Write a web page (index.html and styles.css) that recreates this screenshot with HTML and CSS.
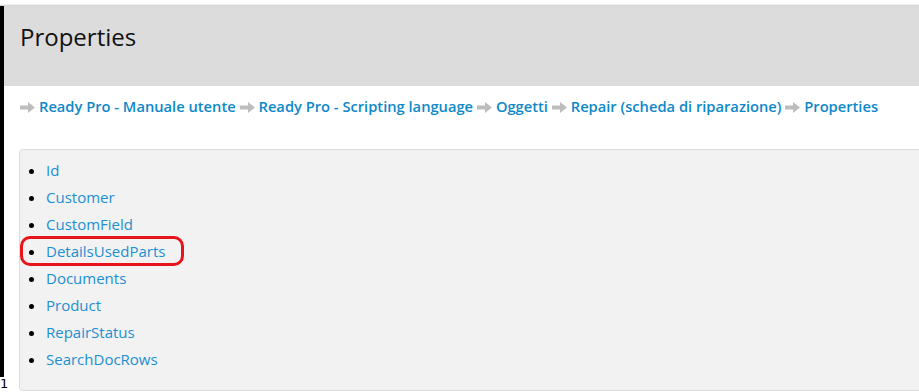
FILE: index.html
```html
<!DOCTYPE html>
<html>
<head>
<meta charset="utf-8">
<link rel="stylesheet" href="styles.css">
</head>
<body>
<div class="topgap"></div>
<div class="page">
  <header class="header">
    <h1 class="title">Properties</h1>
  </header>
  <nav class="crumbs">
    <span class="arrow"><svg width="15" height="11" viewBox="0 0 15 11"><path d="M0 3.5h8V0l7 5.5-7 5.5V7.5H0z" fill="#bdbdbd"/></svg></span><a href="#">Ready Pro - Manuale utente</a>
    <span class="arrow"><svg width="15" height="11" viewBox="0 0 15 11"><path d="M0 3.5h8V0l7 5.5-7 5.5V7.5H0z" fill="#bdbdbd"/></svg></span><a href="#">Ready Pro - Scripting language</a>
    <span class="arrow"><svg width="15" height="11" viewBox="0 0 15 11"><path d="M0 3.5h8V0l7 5.5-7 5.5V7.5H0z" fill="#bdbdbd"/></svg></span><a href="#">Oggetti</a>
    <span class="arrow"><svg width="15" height="11" viewBox="0 0 15 11"><path d="M0 3.5h8V0l7 5.5-7 5.5V7.5H0z" fill="#bdbdbd"/></svg></span><a href="#">Repair (scheda di riparazione)</a>
    <span class="arrow"><svg width="15" height="11" viewBox="0 0 15 11"><path d="M0 3.5h8V0l7 5.5-7 5.5V7.5H0z" fill="#bdbdbd"/></svg></span><a href="#">Properties</a>
  </nav>
  <div class="box">
    <ul class="list">
      <li><a href="#">Id</a></li>
      <li><a href="#">Customer</a></li>
      <li><a href="#">CustomField</a></li>
      <li class="marked"><a href="#">DetailsUsedParts</a><span class="ring"></span></li>
      <li><a href="#">Documents</a></li>
      <li><a href="#">Product</a></li>
      <li><a href="#">RepairStatus</a></li>
      <li><a href="#">SearchDocRows</a></li>
    </ul>
  </div>
</div>
<span class="lineno">1</span>
</body>
</html>
```

FILE: styles.css
```css
html, body {
  margin: 0;
  padding: 0;
  background: #fff;
  overflow: hidden;
  height: 392px;
}
body {
  font-family: "Open Sans", Lato, sans-serif;
  position: relative;
}
.topgap {
  height: 6px;
  background: linear-gradient(#ffffff 0, #ffffff 4px, #c8c8c8 6px);
}
.page {
  border-left: 4px solid #000;
  height: 371px;
  width: 1000px;
}
.header {
  background: #dcdcdc;
  height: 80px;
  padding: 0 0 0 16px;
  display: flex;
  align-items: flex-start;
}
.title {
  margin: 16px 0 0;
  font-size: 24px;
  font-weight: 500;
  color: #111;
  line-height: 30px;
}
.crumbs {
  padding: 10px 0 0 16px;
  height: 30px;
  font-size: 14.7px;
  font-weight: 600;
  line-height: 20px;
  white-space: nowrap;
}
.crumbs a {
  color: #0d88c9;
  text-decoration: none;
}
.arrow {
  display: inline-block;
  margin-right: 4px;
}
.arrow svg {
  vertical-align: -1px;
}
.box {
  margin: 23px 0 0 15px;
  background: #f2f2f2;
  border: 1px solid #dcdcdc;
  border-radius: 4px;
  height: 240px;
  width: 1000px;
}
.list {
  margin: 0;
  padding: 7px 0 0 26px;
  font-size: 15px;
  line-height: 27px;
}
.list li {
  color: #000;
}
.list a {
  color: #1c8fd2;
  text-decoration: none;
}
.marked {
  position: relative;
}
.ring {
  position: absolute;
  left: -26px;
  top: -2px;
  width: 158px;
  height: 24px;
  border: 3px solid #e8141c;
  border-radius: 10px;
}
.lineno {
  position: absolute;
  left: 0;
  top: 376px;
  font-size: 13px;
  line-height: 16px;
  font-family: "DejaVu Sans", sans-serif;
  color: #000;
}
```
